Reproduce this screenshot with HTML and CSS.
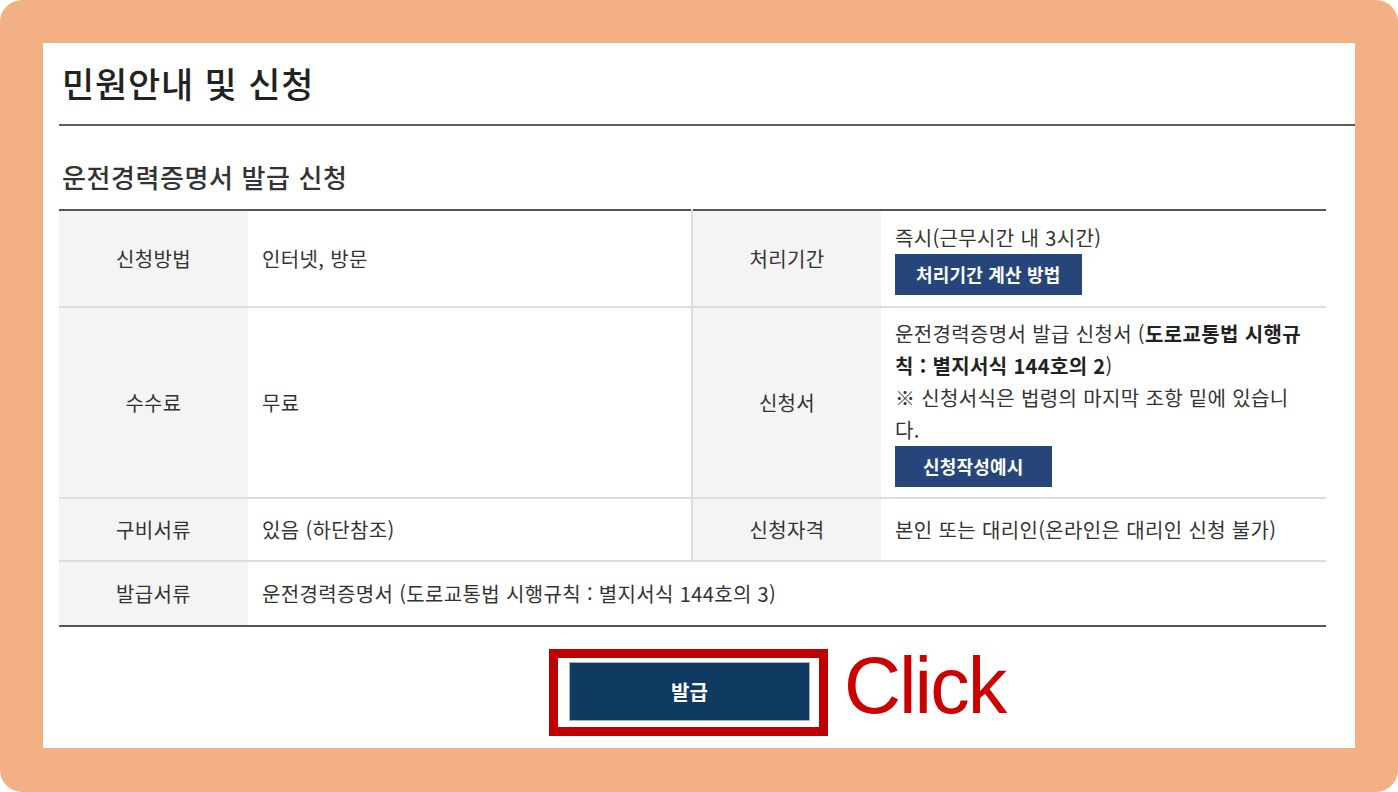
FILE: index.html
```html
<!DOCTYPE html>
<html lang="ko">
<head>
  <meta charset="UTF-8">
  <meta name="viewport" content="width=device-width, initial-scale=1.0">
  <title>민원안내 및 신청</title>
  <link rel="stylesheet" href="styles.css">
</head>
<body>
  <div class="frame">
    <div class="panel">
      <h1 class="page-title">민원안내 및 신청</h1>

      <div class="content">
        <h2 class="sub-title">운전경력증명서 발급 신청</h2>

        <table class="info">
          <colgroup>
            <col class="col-label">
            <col class="col-value">
            <col class="col-label">
            <col class="col-value2">
          </colgroup>
          <tr class="row-1">
            <th>신청방법</th>
            <td>인터넷, 방문</td>
            <th class="split">처리기간</th>
            <td class="narrow">
              즉시(근무시간 내 3시간)<br>
              <a class="btn-small" href="#">처리기간 계산 방법</a>
            </td>
          </tr>
          <tr class="row-2">
            <th>수수료</th>
            <td>무료</td>
            <th class="split">신청서</th>
            <td class="narrow">
              운전경력증명서 발급 신청서 (<b>도로교통법 시행규</b><b>칙 : 별지서식 144호의 2</b>)<br>
              ※ 신청서식은 법령의 마지막 조항 밑에 있습니다.<br>
              <a class="btn-small wide" href="#">신청작성예시</a>
            </td>
          </tr>
          <tr class="row-3">
            <th>구비서류</th>
            <td>있음 (하단참조)</td>
            <th class="split">신청자격</th>
            <td class="narrow">본인 또는 대리인(온라인은 대리인 신청 불가)</td>
          </tr>
          <tr class="row-4">
            <th>발급서류</th>
            <td colspan="3">운전경력증명서 (도로교통법 시행규칙 : 별지서식 144호의 3)</td>
          </tr>
        </table>

        <div class="actions">
          <!-- red annotation box round the button -->
          <div class="mark">
            <a class="btn-issue" href="#">발급</a>
          </div>
          <span class="click">Click</span>
        </div>
      </div>
    </div>
  </div>
</body>
</html>
```

FILE: styles.css
```css
html, body {
  margin: 0;
  background-color: #ffffff;
}

body {
  font-family: "Noto Sans CJK KR", "Noto Sans", sans-serif;
  color: #333333;
}

.frame {
  background-color: #f2b084;
  border-radius: 22px;
  height: 792px;
  box-sizing: border-box;
  padding: 43px 43px 44px 43px;
}

.panel {
  background-color: #ffffff;
  height: 100%;
  padding-left: 16px;
}

.page-title {
  margin: 0;
  padding: 20px 0 21px 3px;
  font-size: 35px;
  line-height: 40px;
  font-weight: 500;
  letter-spacing: 0.8px;
  color: #222222;
  border-bottom: 2px solid #5e5e5e;
}

.content {
  padding-right: 29px;
}

.sub-title {
  margin: 35px 0 16px 3px;
  font-size: 26px;
  line-height: 32px;
  font-weight: 500;
  letter-spacing: 0.6px;
  color: #333333;
}

.info {
  width: 100%;
  border-collapse: collapse;
  border-top: 2px solid #555555;
  border-bottom: 2px solid #555555;
  font-size: 20px;
  line-height: 32px;
  letter-spacing: 0.35px;
}

.col-label {
  width: 189px;
}

.col-value {
  width: 444px;
}

.info tr {
  border-bottom: 2px solid #dddddd;
}

.info tr.row-4 {
  border-bottom: none;
}

.info th {
  padding: 0;
  background-color: #f4f4f4;
  font-weight: normal;
  text-align: center;
  vertical-align: middle;
  color: #333333;
}

.info th.split {
  border-left: 2px solid #dddddd;
}

.info td {
  padding: 0 14px 0 14px;
  vertical-align: middle;
  color: #333333;
}

.info td.narrow {
  padding-right: 20px;
}

.info td b {
  font-weight: bold;
  color: #222222;
}

.row-1 th {
  height: 95px;
}

.row-2 th {
  height: 189px;
}

.row-3 th {
  height: 61px;
}

.row-4 th {
  height: 63px;
}

.btn-small {
  display: inline-block;
  height: 41px;
  line-height: 41px;
  padding: 0 21px;
  background-color: #26467a;
  color: #ffffff;
  font-size: 18px;
  font-weight: bold;
  letter-spacing: 0.2px;
  text-decoration: none;
  vertical-align: top;
}

.btn-small.wide {
  padding: 0 28px;
}

.actions {
  display: flex;
  align-items: flex-start;
  padding-left: 490px;
  margin-top: 22px;
}

.mark {
  border: 9px solid #c00000;
  padding: 4px 9px 6px 11px;
}

.btn-issue {
  display: block;
  width: 239px;
  height: 57px;
  line-height: 57px;
  text-align: center;
  background-color: #0f3a62;
  border: 1px solid #a9b0b8;
  color: #ffffff;
  font-size: 20px;
  font-weight: bold;
  text-decoration: none;
}

.click {
  margin-left: 16px;
  margin-top: -13px;
  font-family: "Liberation Sans", Arial, sans-serif;
  font-size: 79px;
  line-height: 100px;
  letter-spacing: -2px;
  color: #cc0000;
}
```
